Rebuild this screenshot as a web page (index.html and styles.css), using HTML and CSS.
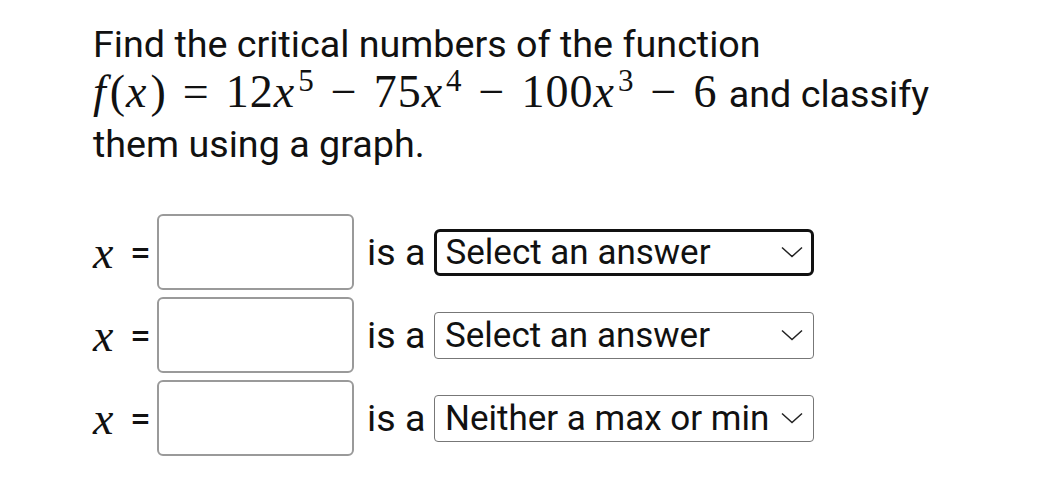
FILE: index.html
```html
<!DOCTYPE html>
<html>
<head>
<meta charset="utf-8">
<link rel="stylesheet" href="styles.css">
</head>
<body>
<div class="page">
  <div class="question">
    <p class="line">Find the critical numbers of the function</p>
    <p class="line"><span class="math"><i class="mf">f</i>(<i class="mx">x</i>)<span class="rel">=</span>12<i class="mx">x</i><sup>5</sup><span class="op">−</span>75<i class="mx">x</i><sup>4</sup><span class="op">−</span>100<i class="mx">x</i><sup>3</sup><span class="op">−</span>6</span> and classify</p>
    <p class="line">them using a graph.</p>
  </div>
  <div class="rows">
    <div class="row">
      <span class="var"><i>x</i></span><span class="eq">=</span>
      <div class="input"></div>
      <span class="isa">is a</span>
      <div class="select focused"><span>Select an answer</span><svg class="chev" width="22" height="12" viewBox="0 0 22 12"><path d="M1 1.5 L11 10.5 L21 1.5" fill="none" stroke="#222" stroke-width="1.5"/></svg></div>
    </div>
    <div class="row">
      <span class="var"><i>x</i></span><span class="eq">=</span>
      <div class="input"></div>
      <span class="isa">is a</span>
      <div class="select"><span>Select an answer</span><svg class="chev" width="22" height="12" viewBox="0 0 22 12"><path d="M1 1.5 L11 10.5 L21 1.5" fill="none" stroke="#222" stroke-width="1.5"/></svg></div>
    </div>
    <div class="row">
      <span class="var"><i>x</i></span><span class="eq">=</span>
      <div class="input"></div>
      <span class="isa">is a</span>
      <div class="select"><span>Neither a max or min</span><svg class="chev" width="22" height="12" viewBox="0 0 22 12"><path d="M1 1.5 L11 10.5 L21 1.5" fill="none" stroke="#222" stroke-width="1.5"/></svg></div>
    </div>
  </div>
</div>
</body>
</html>
```
FILE: styles.css
```css
html, body {
  margin: 0;
  padding: 0;
  background: #fff;
}
body {
  font-family: Roboto, "Liberation Sans", sans-serif;
  color: #111;
}
.page {
  padding: 19px 0 0 93px;
}
.question {
  font-size: 37.7px;
}
.line {
  margin: 0;
  line-height: 50px;
  white-space: nowrap;
}
.math {
  font-family: "Liberation Serif", "Times New Roman", serif;
  font-size: 46px;
  letter-spacing: 1px;
  margin-right: 2px;
  line-height: 0;
}
.math i {
  font-style: italic;
}
.math .mf {
  margin-right: 3px;
}
.math .mx {
  margin-right: 3px;
}
.math .rel {
  margin: 0 16px;
}
.math .op {
  margin: 0 16px;
}
.math sup {
  font-size: 31px;
  line-height: 0;
  vertical-align: 16px;
}
.rows {
  margin-top: 45px;
  display: flex;
  flex-direction: column;
  gap: 7px;
}
.row {
  display: flex;
  align-items: center;
  font-size: 37.7px;
}
.var {
  font-family: "Liberation Serif", serif;
  font-size: 46px;
  width: 37px;
}
.eq {
  width: 27px;
}
.input {
  width: 193px;
  height: 72px;
  border: 2px solid #9a9a9a;
  border-radius: 6px;
}
.isa {
  margin-left: 13px;
  margin-right: 9px;
}
.select {
  box-sizing: border-box;
  width: 380px;
  height: 47px;
  border: 1.5px solid #777;
  border-radius: 4px;
  display: flex;
  align-items: center;
  justify-content: space-between;
  padding: 0 10px 0 9.5px;
  font-size: 35px;
}
.select.focused {
  border: 3px solid #111;
  border-radius: 6px;
  padding-left: 8px;
  padding-right: 8.5px;
}
.chev {
  display: block;
}
```
